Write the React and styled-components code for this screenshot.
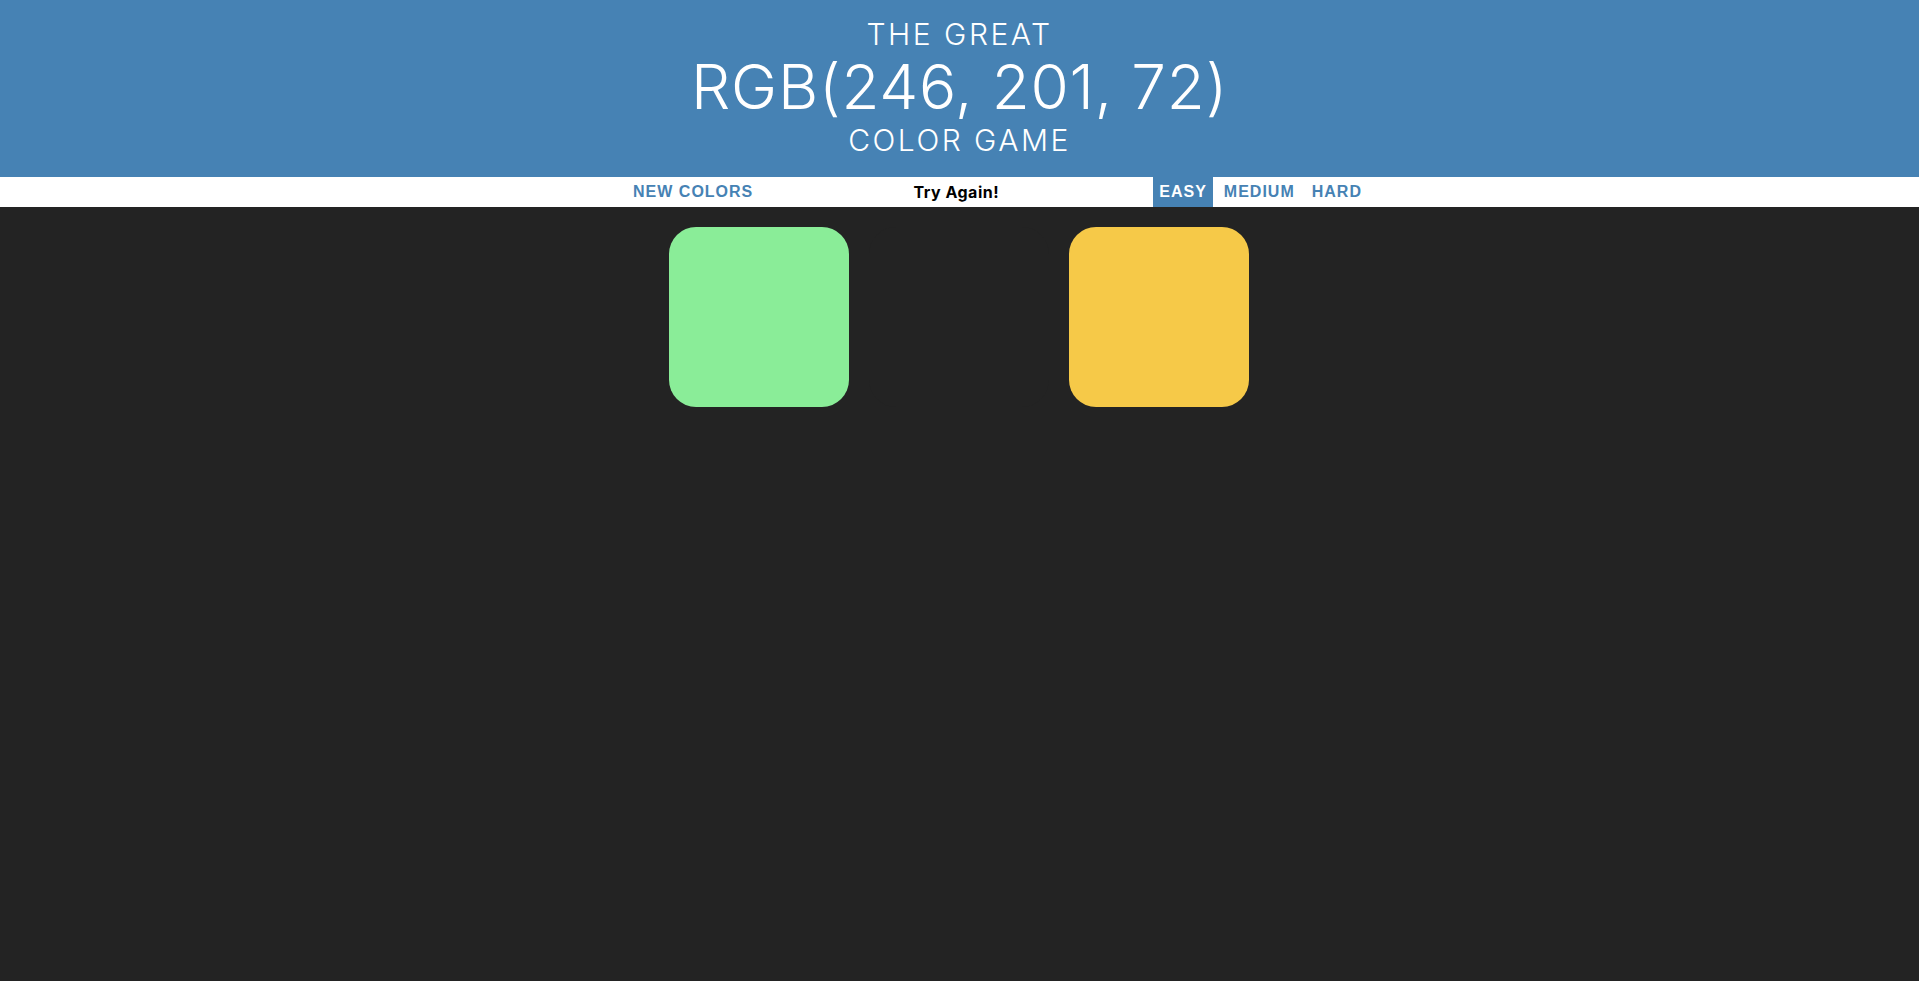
import styled, { createGlobalStyle } from "styled-components";

const GlobalStyle = createGlobalStyle`
  body {
    margin: 0;
    background: #232323;
    font-family: "Inter", "Liberation Sans", sans-serif;
  }
`;

const Title = styled.h1`
  margin: 0;
  padding: 16px 0 19px;
  background: steelblue;
  color: white;
  text-align: center;
  text-transform: uppercase;
  font-weight: 300;
`;

const Line = styled.div`
  font-size: ${(props) => (props.$big ? "62px" : "30px")};
  line-height: ${(props) => (props.$big ? "70px" : "36px")};
  letter-spacing: ${(props) => (props.$big ? "0.8px" : "2.5px")};
`;

const Stripe = styled.div`
  display: flex;
  justify-content: center;
  align-items: stretch;
  height: 30px;
  padding-left: 76px;
  background: white;
  gap: 5px;
`;

const Button = styled.button`
  border: none;
  height: 100%;
  padding: 1px 6px;
  background: ${(props) => (props.$selected ? "steelblue" : "none")};
  color: ${(props) => (props.$selected ? "white" : "steelblue")};
  text-transform: uppercase;
  font-family: "Liberation Sans", Arial, sans-serif;
  font-weight: 700;
  font-size: 16px;
  letter-spacing: 1px;
  outline: none;
  cursor: pointer;
`;

const Message = styled.span`
  display: flex;
  align-items: center;
  justify-content: center;
  flex: 0 0 384px;
  font-family: "Inter", sans-serif;
  font-weight: 700;
  font-size: 16px;
  letter-spacing: 0.5px;
  color: black;
`;

const Container = styled.div`
  max-width: 600px;
  margin: 20px auto;
  display: flex;
  flex-wrap: wrap;
`;

const Square = styled.div`
  width: 30%;
  aspect-ratio: 1;
  margin: 0 1.66%;
  border-radius: 15%;
  background: ${(props) => props.$color};
`;

const colors = ["rgb(138, 237, 152)", "#232323", "rgb(246, 201, 72)"];

export default function App() {
  return (
    <>
      <GlobalStyle />
      <Title>
        <Line>The Great</Line>
        <Line $big>RGB(246, 201, 72)</Line>
        <Line>Color Game</Line>
      </Title>
      <Stripe>
        <Button>New Colors</Button>
        <Message>Try Again!</Message>
        <Button $selected>Easy</Button>
        <Button>Medium</Button>
        <Button>Hard</Button>
      </Stripe>
      <Container>
        {colors.map((c, i) => (
          <Square key={i} $color={c} />
        ))}
      </Container>
    </>
  );
}
